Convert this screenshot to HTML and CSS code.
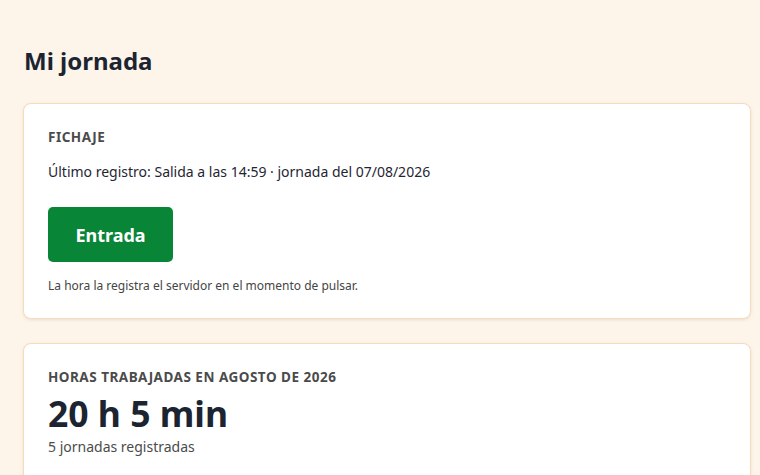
FILE: index.html
```html
<!DOCTYPE html>
<html lang="es">
<head>
<meta charset="utf-8">
<title>Mi jornada</title>
<link rel="stylesheet" href="styles.css">
</head>
<body>
<main class="page">
  <h1 class="title">Mi jornada</h1>
  <section class="card">
    <h2 class="label">Fichaje</h2>
    <p class="last">Último registro: Salida a las 14:59 · jornada del 07/08/2026</p>
    <button class="btn" type="button">Entrada</button>
    <p class="hint">La hora la registra el servidor en el momento de pulsar.</p>
  </section>
  <section class="card">
    <h2 class="label">Horas trabajadas en agosto de 2026</h2>
    <p class="total">20 h 5 min</p>
    <p class="sub">5 jornadas registradas</p>
  </section>
</main>
</body>
</html>
```

FILE: styles.css
```css
* { box-sizing: border-box; }
html, body { margin: 0; padding: 0; }
body {
  background: #fdf5ea;
  font-family: "Noto Sans", "Open Sans", sans-serif;
  color: #1f2633;
}
.page {
  width: 728px;
  margin-left: 23px;
  padding-top: 43px;
  display: flex;
  flex-direction: column;
  gap: 24px;
}
.title {
  margin: 0 0 0 1px;
  font-size: 24px;
  font-weight: 700;
  line-height: 36px;
  color: #1c2431;
}
.card {
  background: #fff;
  border: 1px solid #f5dcbf;
  border-radius: 8px;
  box-shadow: 0 1px 3px rgba(200, 160, 110, 0.25);
  padding: 24px;
  display: flex;
  flex-direction: column;
  align-items: flex-start;
}
.label {
  margin: 0;
  font-size: 13.5px;
  font-weight: 700;
  text-transform: uppercase;
  letter-spacing: 0.5px;
  line-height: 18px;
  color: #4b4b4b;
}
.last {
  margin: 15px 0 0;
  font-size: 14px;
  line-height: 22px;
  color: #1f2633;
}
.btn {
  margin-top: 24px;
  width: 125px;
  height: 55px;
  border: none;
  border-radius: 5px;
  background: #098537;
  color: #fff;
  font-family: inherit;
  font-size: 18px;
  font-weight: 700;
}
.hint {
  margin: 16px 0 0;
  font-size: 12px;
  line-height: 16px;
  color: #454545;
}
.total {
  margin: 5px 0 0;
  font-size: 35.5px;
  font-weight: 700;
  line-height: 44px;
  color: #1c2431;
}
.sub {
  margin: 2px 0 0;
  font-size: 14px;
  line-height: 20px;
  color: #4b4b4b;
}
```
